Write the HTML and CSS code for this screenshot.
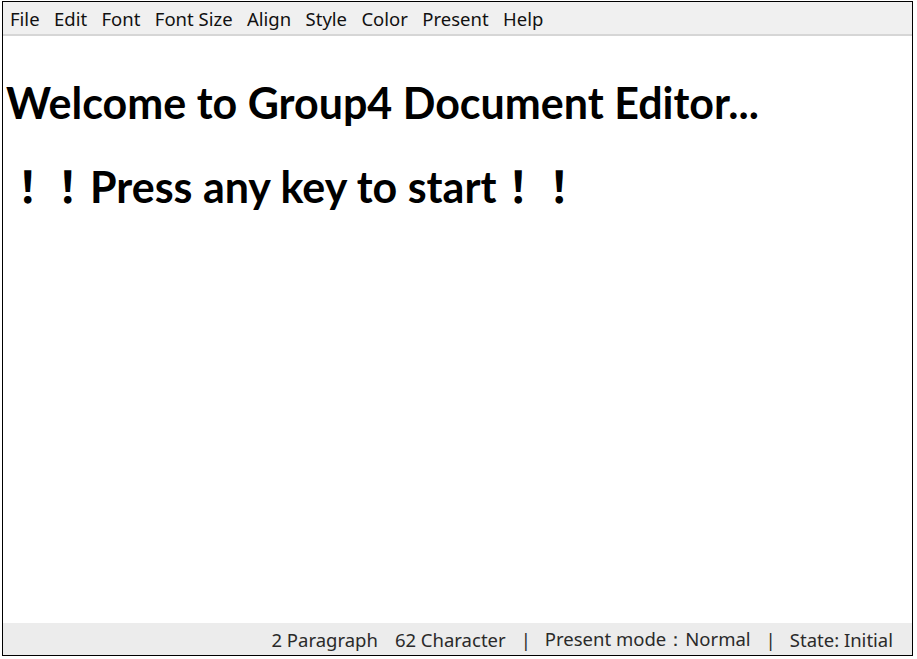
FILE: index.html
```html
<!DOCTYPE html>
<html>
<head>
<meta charset="utf-8">
<link rel="stylesheet" href="styles.css">
</head>
<body>
<div class="window">
  <nav class="menubar">
    <span class="item">File</span>
    <span class="item">Edit</span>
    <span class="item">Font</span>
    <span class="item">Font Size</span>
    <span class="item">Align</span>
    <span class="item">Style</span>
    <span class="item">Color</span>
    <span class="item">Present</span>
    <span class="item">Help</span>
  </nav>
  <main class="doc">
    <p class="line1">Welcome to Group4 Document Editor...</p>
    <p class="line2"><span class="bang">！</span><span class="bang b2">！</span>Press any key to start<span class="bang b3">！</span><span class="bang b4">！</span></p>
  </main>
  <footer class="status">
    <span>2 Paragraph</span>
    <span class="gap-s">62 Character</span>
    <span class="sep">|</span>
    <span>Present mode：Normal</span>
    <span class="sep">|</span>
    <span>State: Initial</span>
  </footer>
</div>
</body>
</html>
```
FILE: styles.css
```css
html, body {
  margin: 0;
  padding: 0;
  background: #ffffff;
}
body {
  width: 917px;
  height: 659px;
  padding: 1px 0 0 2px;
  box-sizing: border-box;
  overflow: hidden;
}
.window {
  width: 911px;
  height: 655px;
  border: 1px solid #000;
  box-sizing: border-box;
  display: flex;
  flex-direction: column;
  background: #fff;
  font-family: "Noto Sans", "Open Sans", sans-serif;
}
.menubar {
  height: 32px;
  background: #f0f0f0;
  border-bottom: 2px solid #d6d6d6;
  display: flex;
  align-items: center;
  padding-left: 7px;
  font-size: 18.5px;
  color: #111;
}
.item {
  margin-right: 14.4px;
}
.doc {
  flex: 1;
  padding-left: 3px;
  font-family: "Lato", "Noto Sans", sans-serif;
  font-weight: 700;
  color: #000;
}
.doc p {
  margin: 0;
}
.line1 {
  font-size: 43px;
  margin-top: 41px !important;
  line-height: 52px;
}
.line2 {
  font-size: 43px;
  line-height: 52px;
  margin-top: 29px !important;
  padding-left: 11px;
  white-space: nowrap;
}
.bang {
  font-family: "Noto Sans CJK SC", sans-serif;
  font-weight: 700;
  letter-spacing: -8px;
}
.b2 { margin-left: 5px; letter-spacing: -10px; }
.b3 { margin-left: 11px; }
.b4 { margin-left: 6px; }
.status {
  height: 32px;
  background: #ececec;
  display: flex;
  align-items: center;
  justify-content: flex-end;
  padding-right: 19px;
  font-size: 18.5px;
  color: #2a2a2a;
}
.status .gap-s {
  margin-left: 17px;
}
.status .sep {
  margin: 0 14px 0 15px;
}
```
